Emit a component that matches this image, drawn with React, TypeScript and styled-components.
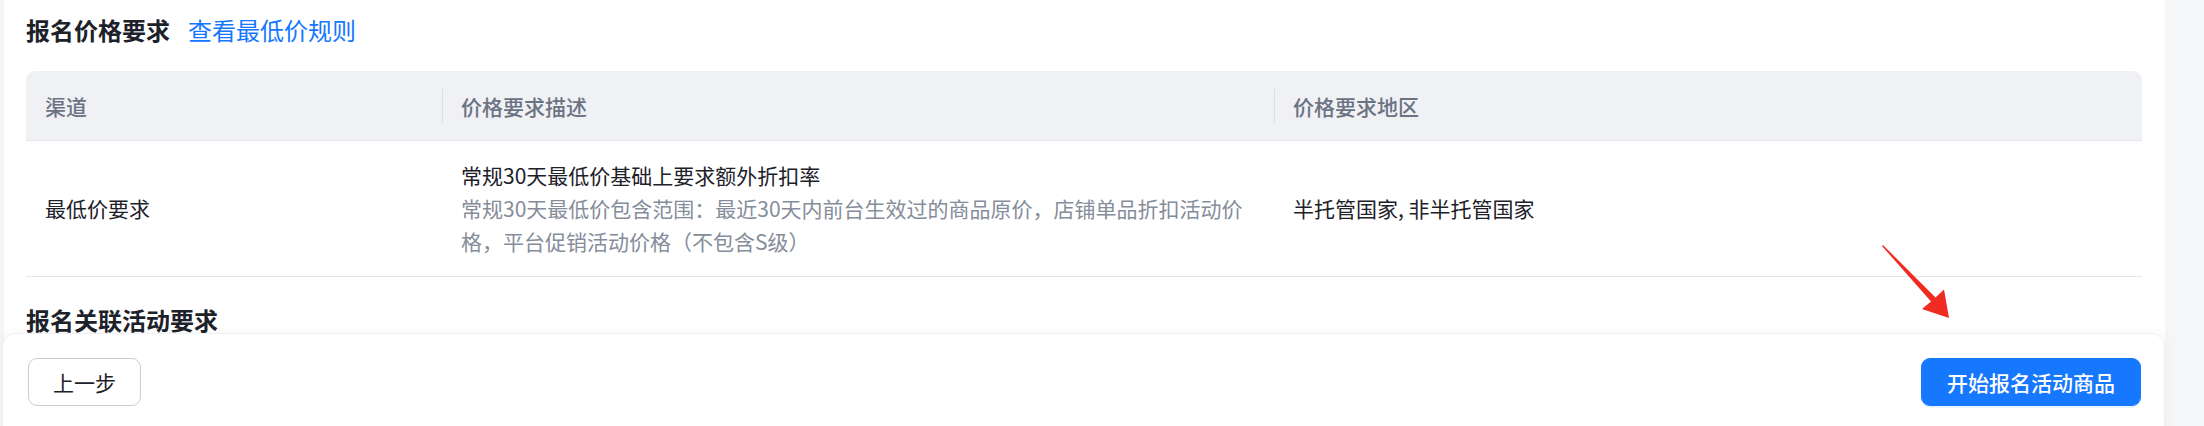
import React from 'react';
import styled, { createGlobalStyle } from 'styled-components';

const GlobalStyle = createGlobalStyle`
  html, body {
    margin: 0;
    padding: 0;
    background: #f5f6f8;
    font-family: "Noto Sans CJK SC", "Liberation Sans", sans-serif;
    color: #1d2129;
  }
`;

const columns = '416px 832px 1fr';

const App = () => {
  return (
    <Page>
      <GlobalStyle />
      <Card>
        <SectionHead>
          <SectionTitle>报名价格要求</SectionTitle>
          <RuleLink href="#">查看最低价规则</RuleLink>
        </SectionHead>

        <Table>
          <HeaderRow>
            <HeaderCell>渠道</HeaderCell>
            <HeaderCell $divider>价格要求描述</HeaderCell>
            <HeaderCell $divider>价格要求地区</HeaderCell>
          </HeaderRow>
          <BodyRow>
            <BodyCell>最低价要求</BodyCell>
            <BodyCell>
              <DescMain>常规30天最低价基础上要求额外折扣率</DescMain>
              <DescSub>
                常规30天最低价包含范围：最近30天内前台生效过的商品原价，店铺单品折扣活动价
                <br />
                格，平台促销活动价格（不包含S级）
              </DescSub>
            </BodyCell>
            <BodyCell>半托管国家, 非半托管国家</BodyCell>
          </BodyRow>
        </Table>

        <SectionTitle $spaced>报名关联活动要求</SectionTitle>
      </Card>

      <Pointer width="80" height="84" viewBox="0 0 80 84">
        <polygon
          points="7,4 59.5,56.5 68,48.5 73,77 46,68 55,60.5 6,5"
          fill="#ef2b22"
        />
      </Pointer>

      <FooterBar>
        <Button>上一步</Button>
        <Button $primary>开始报名活动商品</Button>
      </FooterBar>
    </Page>
  );
};

export default App;

const Page = styled.div`
  position: relative;
  height: 426px;
  overflow: hidden;
  padding: 0 39px 0 4px;
`;

const Card = styled.div`
  background: #ffffff;
  height: 100%;
  padding: 12px 23px 0 22px;
  box-sizing: border-box;
`;

const SectionHead = styled.div`
  display: flex;
  align-items: center;
  gap: 18px;
`;

const SectionTitle = styled.div<{ $spaced?: boolean }>`
  font-size: 24px;
  line-height: 36px;
  font-weight: 700;
  color: #1d2129;
  margin-top: ${(p) => (p.$spaced ? '25px' : '0')};
`;

const RuleLink = styled.a`
  font-size: 24px;
  line-height: 36px;
  color: #1677ff;
  text-decoration: none;
`;

const Table = styled.div`
  margin-top: 23px;
  border-radius: 9px 9px 0 0;
  overflow: hidden;
`;

const HeaderRow = styled.div`
  display: grid;
  grid-template-columns: ${columns};
  height: 69px;
  background: #f0f1f4;
  border-bottom: 1px solid #e3e5ea;
`;

const HeaderCell = styled.div<{ $divider?: boolean }>`
  position: relative;
  display: flex;
  align-items: center;
  padding: 0 18px 0 19px;
  font-size: 21px;
  font-weight: 500;
  color: #6b7383;

  &::before {
    content: '';
    display: ${(p) => (p.$divider ? 'block' : 'none')};
    position: absolute;
    left: 0;
    top: 50%;
    width: 1px;
    height: 34px;
    transform: translateY(-50%);
    background: #dcdfe5;
  }
`;

const BodyRow = styled.div`
  display: grid;
  grid-template-columns: ${columns};
  border-bottom: 1px solid #e5e6eb;
`;

const BodyCell = styled.div`
  display: flex;
  flex-direction: column;
  justify-content: center;
  padding: 18px 18px 18px 19px;
  font-size: 21px;
  line-height: 33px;
  color: #1d2129;
`;

const DescMain = styled.div`
  color: #1d2129;
`;

const DescSub = styled.div`
  color: #868d9a;
  white-space: nowrap;
`;

const Pointer = styled.svg`
  position: absolute;
  left: 1876px;
  top: 241px;
`;

const FooterBar = styled.div`
  position: absolute;
  left: 2px;
  top: 333px;
  width: 2163px;
  height: 110px;
  box-sizing: border-box;
  padding: 24px 23px 0 25px;
  display: flex;
  justify-content: space-between;
  align-items: flex-start;
  background: #ffffff;
  border: 1px solid #eef0f3;
  border-radius: 14px;
  box-shadow: 0 -2px 10px rgba(30, 40, 60, 0.04);
`;

const Button = styled.button<{ $primary?: boolean }>`
  height: 48px;
  padding: 0 ${(p) => (p.$primary ? '25px' : '24px')};
  border-radius: 9px;
  font-family: "Noto Sans CJK SC", "Liberation Sans", sans-serif;
  font-size: 21px;
  font-weight: ${(p) => (p.$primary ? 500 : 400)};
  cursor: pointer;
  border: 1px solid ${(p) => (p.$primary ? '#1677ff' : '#c9ced6')};
  background: ${(p) => (p.$primary ? '#1677ff' : '#ffffff')};
  color: ${(p) => (p.$primary ? '#ffffff' : '#1d2129')};
  box-shadow: ${(p) => (p.$primary ? '0 2px 0 rgba(5, 145, 255, 0.1)' : 'none')};
`;
